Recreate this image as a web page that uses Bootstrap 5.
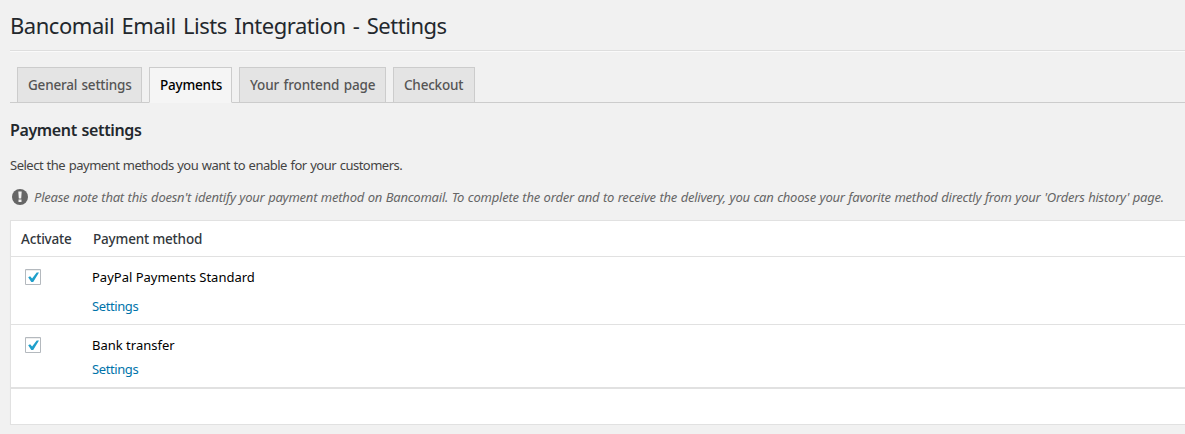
<!DOCTYPE html>
<html lang="en">
<head>
<meta charset="utf-8">
<title>Bancomail Email Lists Integration - Settings</title>
<link href="https://cdn.jsdelivr.net/npm/bootstrap@5.3.0/dist/css/bootstrap.min.css" rel="stylesheet">
<style>
body{background:#f1f1f1;color:#444;font-family:"Noto Sans","Open Sans",sans-serif;font-size:13px;line-height:20px;overflow:hidden}
.wrap{padding-left:10px}
h1{height:50px;padding-top:10px;font-size:22px;line-height:30px;letter-spacing:-.46px;word-spacing:2px;font-weight:400;color:#23282d;white-space:nowrap}
.rule{height:2px;border-top:1px solid #dedede;background:#fafafa}
.nav-tabs{--bs-nav-tabs-border-color:#ccc;--bs-nav-tabs-border-radius:0;padding:15px 0 0 7px;gap:7px;flex-wrap:nowrap}
.nav-tabs .nav-link{height:36px;padding:5px 0 0 10px;border:1px solid #ccc;background:#e4e4e4;color:#555;font-size:13.5px;font-weight:500;line-height:24px;letter-spacing:-.2px;word-spacing:1px;white-space:nowrap}
.nav-tabs .nav-link.t3{letter-spacing:-.12px}
.nav-tabs .nav-link.active{background:#f5f5f5;color:#000;border-color:#ccc #ccc #f5f5f5}
.t1{width:125px}.t2{width:83px}.t3{width:147px}.t4{width:82px}
h2{font-size:16px;line-height:24px;letter-spacing:-.37px;word-spacing:1px;font-weight:600;color:#23282d;margin:15px 0 0}
.intro{letter-spacing:-.5px;word-spacing:.65px;margin:13px 0 0;white-space:nowrap}
.note{font-style:italic;letter-spacing:-.225px;word-spacing:.45px;color:#666;margin-top:12px;padding-left:2px;white-space:nowrap}
.note svg{width:16px;height:16px;margin-right:6px}
.methods{margin-top:13px;width:1200px;height:205px;background:#fff;border:1px solid #e1e1e1;box-shadow:0 1px 1px rgba(0,0,0,.04)}
.methods>.d-flex{border-bottom:1px solid #e1e1e1;color:#000}
.methods>.head{height:36px;color:#32373c;font-weight:500;font-size:13.5px;letter-spacing:-.17px;padding-top:8px}
.first{height:68px;padding-top:10px}
.second{height:64px;padding-top:10px;border-bottom-width:2px!important}
.c1{width:81px;flex:none;padding-left:10px}
.check{display:block;width:16px;height:16px;margin:2px 0 0 4px}
.methods a{display:block;color:#0073aa;text-decoration:none;letter-spacing:-.4px}
.first a{margin-top:9px}
.second a{margin-top:4px}
.head-method{padding-left:1px}
</style>
</head>
<body>
<main class="wrap">
<h1 class="mb-0">Bancomail Email Lists Integration - Settings</h1>
<div class="rule"></div>
<nav class="nav nav-tabs">
<a class="nav-link t1" href="#">General settings</a>
<a class="nav-link t2 active" href="#">Payments</a>
<a class="nav-link t3" href="#">Your frontend page</a>
<a class="nav-link t4" href="#">Checkout</a>
</nav>
<h2>Payment settings</h2>
<p class="intro">Select the payment methods you want to enable for your customers.</p>
<div class="note d-flex align-items-center"><svg viewBox="0 0 16 16"><circle cx="8" cy="8" r="8" fill="#666"/><path d="M6.300 2.500h3.400l-.5 7h-2.400zM6.500 10.500h3v2.500h-3z" fill="#f1f1f1"/></svg><span>Please note that this doesn't identify your payment method on Bancomail. To complete the order and to receive the delivery, you can choose your favorite method directly from your 'Orders history' page.</span></div>
<section class="methods">
<div class="d-flex head"><div class="c1">Activate</div><div class="head-method">Payment method</div></div>
<div class="d-flex first"><div class="c1"><svg class="check" role="checkbox" aria-checked="true" viewBox="0 0 16 16"><path d="M.5.5h15v15H.5z" fill="#fff" stroke="#b4b9be"/><path d="M1 1.500h14" stroke="#eee"/><path d="M3.200 8.200l1.900-1 2 2.200 4.600-6 2.300.1L8.200 13H6.300z" fill="#1e9fcb"/></svg></div><div><div>PayPal Payments Standard</div><a href="#">Settings</a></div></div>
<div class="d-flex second"><div class="c1"><svg class="check" role="checkbox" aria-checked="true" viewBox="0 0 16 16"><path d="M.5.5h15v15H.5z" fill="#fff" stroke="#b4b9be"/><path d="M1 1.500h14" stroke="#eee"/><path d="M3.200 8.200l1.900-1 2 2.200 4.600-6 2.300.1L8.200 13H6.300z" fill="#1e9fcb"/></svg></div><div><div>Bank transfer</div><a href="#">Settings</a></div></div>
</section>
</main>
<script src="https://cdn.jsdelivr.net/npm/bootstrap@5.3.0/dist/js/bootstrap.bundle.min.js"></script>
</body>
</html>
